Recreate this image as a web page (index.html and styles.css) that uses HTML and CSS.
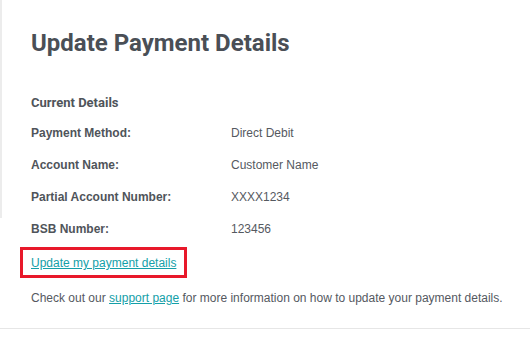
FILE: index.html
```html
<!DOCTYPE html>
<html>
<head>
<meta charset="utf-8">
<link rel="stylesheet" href="styles.css">
</head>
<body>
<div class="page">
  <h1 class="title">Update Payment Details</h1>
  <div class="section-title">Current Details</div>
  <div class="details">
    <div class="label">Payment Method:</div><div class="value">Direct Debit</div>
    <div class="label">Account Name:</div><div class="value">Customer Name</div>
    <div class="label">Partial Account Number:</div><div class="value">XXXX1234</div>
    <div class="label">BSB Number:</div><div class="value">123456</div>
  </div>
  <div class="highlight"><a class="link" href="#">Update my payment details</a></div>
  <p class="note">Check out our <a class="link" href="#">support page</a> for more information on how to update your payment details.</p>
</div>
</body>
</html>
```
FILE: styles.css
```css
html, body {
  margin: 0;
  padding: 0;
  background: #ffffff;
}
body {
  font-family: "Liberation Sans", Arial, sans-serif;
  font-size: 12px;
  color: #55595f;
}
.page {
  position: relative;
  padding: 29px 0 22px 31px;
  border-bottom: 1px solid #e6e6e6;
}
.page::before {
  content: "";
  position: absolute;
  left: 0;
  top: 0;
  width: 2px;
  height: 218px;
  background: #ececec;
}
.title {
  margin: 0;
  font-family: Roboto, "Liberation Sans", sans-serif;
  font-weight: 700;
  font-size: 24px;
  line-height: 28px;
  color: #4a4f56;
}
.section-title {
  margin-top: 38px;
  font-family: Roboto, "Liberation Sans", sans-serif;
  font-weight: 700;
  font-size: 13px;
  line-height: 16px;
  color: #4f545a;
}
.details {
  margin-top: 14px;
  display: grid;
  grid-template-columns: 200px auto;
  row-gap: 16px;
  line-height: 16px;
}
.label {
  font-weight: 700;
  color: #4f545a;
}
.value {
  color: #55595f;
}
.highlight {
  display: inline-block;
  margin: 10px 0 0 -11px;
  padding: 5px 8px 4px 8px;
  border: 3px solid #e8182a;
  line-height: 16px;
}
.link {
  color: #14a0a8;
  text-decoration: underline;
}
.note {
  margin: 12px 0 0 0;
  line-height: 16px;
  color: #55595f;
}
```
